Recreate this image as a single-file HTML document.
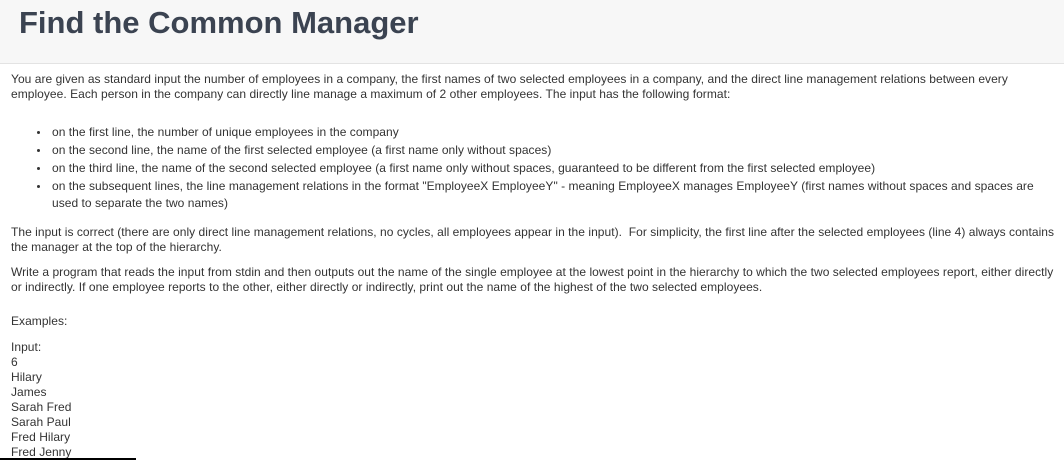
<!DOCTYPE html>
<html><head><meta charset="utf-8"><style>
body{margin:0;width:1064px;height:461px;overflow:hidden;background:#fff;font-family:"Liberation Sans",Arial,sans-serif;font-size:12px;color:#333;position:relative}
.hd{position:absolute;left:0;top:0;width:1064px;height:63px;background:#f7f7f7;border-bottom:1px solid #e3e3e3}
.hd h1{position:absolute;left:19px;top:4px;margin:0;font-family:"Liberation Sans",sans-serif;font-size:31px;line-height:38px;font-weight:bold;color:#3b4351}
.t{position:absolute;left:11px;line-height:15px;white-space:nowrap;letter-spacing:0.04px}
.b{position:absolute;left:52px;line-height:17px;white-space:nowrap;letter-spacing:0.04px}
.b:before{content:"";position:absolute;left:-15px;top:7px;width:3px;height:3px;border-radius:50%;background:#333}
.ln{position:absolute;left:0;top:458px;width:136px;height:2px;background:#000}
</style></head><body>
<div class="hd"><h1>Find the Common Manager</h1></div>
<div class="t" style="top:72px">You are given as standard input the number of employees in a company, the first names of two selected employees in a company, and the direct line management relations between every<br>employee. Each person in the company can directly line manage a maximum of 2 other employees. The input has the following format:</div>
<div class="b" style="top:124px">on the first line, the number of unique employees in the company</div>
<div class="b" style="top:142px">on the second line, the name of the first selected employee (a first name only without spaces)</div>
<div class="b" style="top:160px">on the third line, the name of the second selected employee (a first name only without spaces, guaranteed to be different from the first selected employee)</div>
<div class="b" style="top:178px">on the subsequent lines, the line management relations in the format "EmployeeX EmployeeY" - meaning EmployeeX manages EmployeeY (first names without spaces and spaces are<br>used to separate the two names)</div>
<div class="t" style="top:225px">The input is correct (there are only direct line management relations, no cycles, all employees appear in the input).&nbsp; For simplicity, the first line after the selected employees (line 4) always contains<br>the manager at the top of the hierarchy.</div>
<div class="t" style="top:265px">Write a program that reads the input from stdin and then outputs out the name of the single employee at the lowest point in the hierarchy to which the two selected employees report, either directly<br>or indirectly. If one employee reports to the other, either directly or indirectly, print out the name of the highest of the two selected employees.</div>
<div class="t" style="top:314px">Examples:</div>
<div class="t" style="top:340px">Input:<br>6<br>Hilary<br>James<br>Sarah Fred<br>Sarah Paul<br>Fred Hilary<br>Fred Jenny</div>
<div class="ln"></div>
</body></html>
